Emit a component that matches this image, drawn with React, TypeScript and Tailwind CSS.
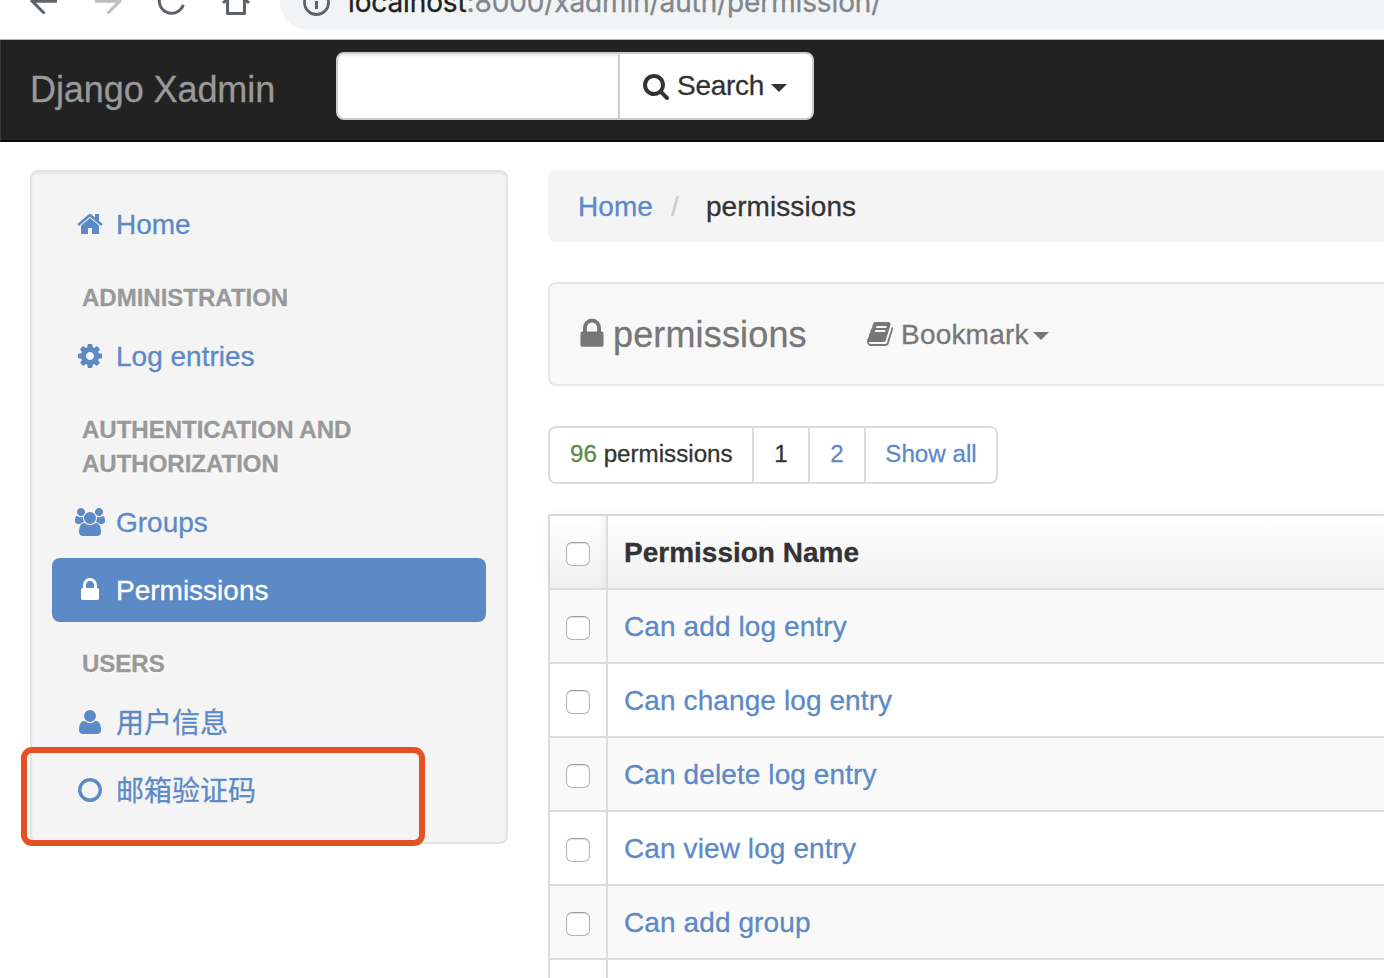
import type { ReactNode } from "react";

const PATHS = {
  home: "M1472 992v480q0 26-19 45t-45 19h-384v-384h-256v384h-384q-26 0-45-19t-19-45v-480q0-1 .5-3t.5-3l575-474 575 474q1 2 1 6zm223-69l-62 74q-8 9-21 11h-3q-13 0-21-7l-692-577-692 577q-12 8-24 7-13-2-21-11l-62-74q-8-10-7-23.5t11-21.5l719-599q32-26 76-26t76 26l244 204v-195q0-14 9-23t23-9h192q14 0 23 9t9 23v408l219 182q10 8 11 21.5t-7 23.5z",
  cog: "M1152 896q0-106-75-181t-181-75-181 75-75 181 75 181 181 75 181-75 75-181zm512-109v222q0 12-8 23t-20 13l-185 28q-19 54-39 91 35 50 107 138 10 12 10 25t-9 23q-27 37-99 108t-94 71q-12 0-26-9l-138-108q-44 23-91 38-16 136-29 186-7 28-36 28h-222q-14 0-24.5-8.5t-11.5-21.5l-28-184q-49-16-90-37l-141 107q-10 9-25 9-14 0-25-11-126-114-165-168-7-10-7-23 0-12 8-23 15-21 51-66.5t54-70.5q-27-50-41-99l-183-27q-13-2-21-12.5t-8-23.5v-222q0-12 8-23t19-13l186-28q14-46 39-92-40-57-107-138-10-12-10-24 0-10 9-23 26-36 98.5-107.5t94.5-71.5q13 0 26 10l138 107q44-23 91-38 16-136 29-186 7-28 36-28h222q14 0 24.5 8.5t11.5 21.5l28 184q49 16 90 37l142-107q9-9 24-9 13 0 25 10 129 119 165 170 7 8 7 22 0 12-8 23-15 21-51 66.5t-54 70.5q26 50 41 98l183 28q13 2 21 12.5t8 23.5z",
  group: "M657 896q-162 5-265 128h-134q-82 0-138-40.5t-56-118.5q0-353 124-353 6 0 43.5 21t97.5 42.5 119 21.5q67 0 133-23-5 37-5 66 0 139 81 256zm1071 637q0 120-73 189.5t-194 69.5h-874q-121 0-194-69.5t-73-189.5q0-53 3.5-103.5t14-109 26.5-108.5 43-97.5 62-81 85.5-53.5 111.5-20q10 0 43 21.5t73 48 107 48 135 21.5 135-21.5 107-48 73-48 43-21.5q61 0 111.5 20t85.5 53.5 62 81 43 97.5 26.5 108.5 14 109 3.5 103.5zm-1024-1277q0 106-75 181t-181 75-181-75-75-181 75-181 181-75 181 75 75 181zm704 384q0 159-112.5 271.5t-271.5 112.5-271.5-112.5-112.5-271.5 112.5-271.5 271.5-112.5 271.5 112.5 112.5 271.5zm576 225q0 78-56 118.5t-138 40.5h-134q-103-123-265-128 81-117 81-256 0-29-5-66 66 23 133 23 59 0 119-21.5t97.5-42.5 43.5-21q124 0 124 353zm-128-609q0 106-75 181t-181 75-181-75-75-181 75-181 181-75 181 75 75 181z",
  lock: "M640 768h512v-192q0-106-75-181t-181-75-181 75-75 181v192zm832 96v576q0 40-28 68t-68 28h-960q-40 0-68-28t-28-68v-576q0-40 28-68t68-28h32v-192q0-184 132-316t316-132 316 132 132 316v192h32q40 0 68 28t28 68z",
  user: "M1600 1405q0 120-73 189.5t-194 69.5h-874q-121 0-194-69.5t-73-189.5q0-53 3.5-103.5t14-109 26.5-108.5 43-97.5 62-81 85.5-53.5 111.5-20q9 0 42 21.5t74.5 48 108 48 133.5 21.5 133.5-21.5 108-48 74.5-48 42-21.5q61 0 111.5 20t85.5 53.5 62 81 43 97.5 26.5 108.5 14 109 3.5 103.5zm-320-893q0 159-112.5 271.5t-271.5 112.5-271.5-112.5-112.5-271.5 112.5-271.5 271.5-112.5 271.5 112.5 112.5 271.5z",
  circle: "M896 352q-148 0-273 73t-198 198-73 273 73 273 198 198 273 73 273-73 198-198 73-273-73-273-198-198-273-73zm768 544q0 209-103 385.5t-279.5 279.5-385.5 103-385.5-103-279.5-279.5-103-385.5 103-385.5 279.5-279.5 385.5-103 385.5 103 279.5 279.5 103 385.5z",
  search: "M1216 832q0-185-131.5-316.5t-316.5-131.5-316.5 131.5-131.5 316.5 131.5 316.5 316.5 131.5 316.5-131.5 131.5-316.5zm512 832q0 52-38 90t-90 38q-54 0-90-38l-343-342q-179 124-399 124-143 0-273.5-55.5t-225-150-150-225-55.5-273.5 55.5-273.5 150-225 225-150 273.5-55.5 273.5 55.5 225 150 150 225 55.5 273.5q0 220-124 399l343 343q37 37 37 90z",
  book: "M1703 478q40 57 18 129l-275 906q-19 64-76.5 107.5t-122.5 43.5h-923q-77 0-148.5-53.5t-99.5-131.5q-24-67-2-127 0-4 3-27t4-37q1-8-3-21.5t-3-19.5q2-11 8-21t16.5-23.5 16.5-23.5q23-38 45-91.5t30-91.5q3-10 .5-30t-.5-28q3-11 17-28t17-23q21-36 42-92t25-90q1-9-2.5-32t.5-28q4-13 22-30.5t22-22.5q19-26 42.5-84.5t27.5-96.5q1-8-3-25.5t-2-26.5q2-8 9-18t18-23 17-21q8-12 16.5-30.5t15-35 16-36 19.5-32 26.5-23.5 36-11.5 47.5 5.5l-1 3q38-9 51-9h761q74 0 114 56t18 130l-274 906q-36 119-71.5 153.5t-128.5 34.5h-869q-27 0-38 15-11 16-1 43 24 70 144 70h923q29 0 56-15.5t35-41.5l300-987q7-22 5-57 38 15 59 43zm-1064 2q-4 13 2 22.5t20 9.5h608q13 0 25.5-9.5t16.5-22.5l21-64q4-13-2-22.5t-20-9.5h-608q-13 0-25.5 9.5t-16.5 22.5zm-83 256q-4 13 2 22.5t20 9.5h608q13 0 25.5-9.5t16.5-22.5l21-64q4-13-2-22.5t-20-9.5h-608q-13 0-25.5 9.5t-16.5 22.5z",
};

type IconName = keyof typeof PATHS;

function Icon({ name, className = "size-7" }: { name: IconName; className?: string }) {
  return (
    <svg
      viewBox={name === "group" ? "0 0 2048 1792" : "0 0 1792 1792"}
      className={`shrink-0 fill-current ${className}`}
      aria-hidden="true"
    >
      <path d={PATHS[name]} />
    </svg>
  );
}

function Caret({ className = "" }: { className?: string }) {
  return (
    <svg viewBox="0 0 16 8" className={`h-2 w-4 shrink-0 fill-current ${className}`} aria-hidden="true">
      <path d="M0 0h16L8 8z" />
    </svg>
  );
}

function BrowserBar() {
  return (
    <div className="flex h-10 items-start overflow-hidden border-b border-[#b4b5b7] bg-white">
      <svg viewBox="0 0 280 39" className="h-[39px] w-[280px] shrink-0 fill-none" strokeWidth="3" aria-hidden="true">
        <g stroke="#5f6368">
          <path d="M57 1.300H33M44.500 13.500L32 1L44.500 -11.500" />
          <path d="M183.300 4.800A12.300 12.300 0 1 1 180.500 -7.500" />
          <path d="M223 3L236 -9L249 3M227.500 0V13.500H244.500V0" strokeLinejoin="round" />
        </g>
        <path d="M95 1.300H119M107.500 13.500L120 1L107.500 -11.500" stroke="#bcbec0" />
      </svg>
      <div className="flex h-[30px] grow items-start rounded-bl-[28px] bg-[#f1f3f4]">
        <svg viewBox="0 0 32 20" className="ml-5 h-5 w-8 shrink-0" aria-hidden="true">
          <circle cx="16.500" cy="2.500" r="12" fill="none" stroke="#5f6368" strokeWidth="2.800" />
          <path d="M16.500 1v8" stroke="#5f6368" strokeWidth="3" />
        </svg>
        <div className="-mt-[18px] ml-4 font-['Inter',sans-serif] text-[28px] leading-10 tracking-[-0.120px] whitespace-nowrap text-[#80868b]">
          <span className="text-[#202124]">localhost</span>:8000/xadmin/auth/permission/
        </div>
      </div>
    </div>
  );
}

function Navbar() {
  return (
    <header className="flex h-[102px] items-start border-b-2 border-l border-b-[#080808] border-l-[#3a3a3a] bg-[#222]">
      <div className="mt-[30px] ml-[29px] w-[306px] text-[36px] leading-10 tracking-[-0.080px] whitespace-nowrap text-[#999]">
        Django Xadmin
      </div>
      <div className="mt-3 flex h-[68px] w-[478px] overflow-hidden rounded-lg border-2 border-[#ccc] bg-white text-[#333]">
        <input className="w-[282px] border-r-2 border-[#ccc] shadow-[inset_0_2px_2px_rgba(0,0,0,0.075)] outline-none" aria-label="Search" />
        <button className="flex grow items-center pl-[22px]">
          <Icon name="search" className="mb-px size-7" />
          <span className="ml-[7px] text-[28px] leading-10 tracking-[-0.300px]">Search</span>
          <Caret className="mt-1 ml-[7px]" />
        </button>
      </div>
    </header>
  );
}

function NavItem({ icon, children, active = false }: { icon: IconName; children: ReactNode; active?: boolean }) {
  return (
    <li
      className={
        active
          ? "flex h-16 items-center rounded-lg bg-[#5c8ac6] pl-[22px] text-white"
          : "flex h-16 items-center pl-[22px] text-[#5c8ac6]"
      }
    >
      <span className="flex w-8 justify-center">
        <Icon name={icon} className={icon === "group" ? "h-7 w-8" : "size-7"} />
      </span>
      <span className="mt-0.5 ml-2.5 text-[28px] leading-10 whitespace-nowrap">{children}</span>
    </li>
  );
}

function NavHeader({ children }: { children: ReactNode }) {
  return (
    <h2 className="mt-[25px] mb-[9px] pl-[30px] text-[24px] leading-[34px] font-bold text-[#999] [text-shadow:0_2px_0_rgba(255,255,255,0.5)]">
      {children}
    </h2>
  );
}

function Sidebar() {
  return (
    <nav className="relative h-[674px] w-[478px] shrink-0 rounded-lg border-2 border-[#e3e3e3] bg-[#f4f4f4] p-5 shadow-[inset_0_2px_2px_rgba(0,0,0,0.05)]">
      <ul>
        <NavItem icon="home">Home</NavItem>
      </ul>
      <NavHeader>ADMINISTRATION</NavHeader>
      <ul>
        <NavItem icon="cog">Log entries</NavItem>
      </ul>
      <NavHeader>
        AUTHENTICATION AND
        <br />
        AUTHORIZATION
      </NavHeader>
      <ul className="flex flex-col gap-1">
        <NavItem icon="group">Groups</NavItem>
        <NavItem icon="lock" active>Permissions</NavItem>
      </ul>
      <NavHeader>USERS</NavHeader>
      <ul className="flex flex-col gap-1">
        <NavItem icon="user"><span className="block pt-px">用户信息</span></NavItem>
        <NavItem icon="circle"><span className="block pt-px">邮箱验证码</span></NavItem>
      </ul>
      <div className="absolute top-[574.500px] -left-[11.500px] h-[99.500px] w-[404px] rounded-[11px] border-[6px] border-[#e65025]" />
    </nav>
  );
}

function Checkbox() {
  return (
    <span className="mt-1 block size-6 rounded-[6px] border border-[#b4b4b4] border-t-[#9c9c9c] bg-white shadow-[inset_0_1px_1px_rgba(0,0,0,0.12)]" />
  );
}

const ROWS = ["Can add log entry", "Can change log entry", "Can delete log entry", "Can view log entry", "Can add group", ""];

function PermissionTable() {
  return (
    <div className="mt-[30px] border-t-2 border-l-2 border-[#ddd]">
      <div className="flex h-[74px] border-b-2 border-[#ddd] bg-linear-to-b from-white to-[#f0f0f0] shadow-[0_0_10px_rgba(0,0,0,0.06)]">
        <div className="flex w-[58px] items-center justify-center border-r-2 border-[#ddd] shadow-[inset_-6px_0_8px_-4px_rgba(0,0,0,0.05)]">
          <Checkbox />
        </div>
        <div className="flex items-center pt-0.5 pl-4 text-[28px] font-bold text-[#333]">Permission Name</div>
      </div>
      {ROWS.map((label, i) => (
        <div key={i} className="flex h-[74px] border-b-2 border-[#ddd] odd:bg-white even:bg-[#f9f9f9]">
          <div className="flex w-[58px] items-center justify-center border-r-2 border-[#ddd]">
            <Checkbox />
          </div>
          <div className="flex items-center pt-0.5 pl-4 text-[28px] tracking-[0.100px] text-[#5c8ac6] [-webkit-text-stroke:0.300px]">{label}</div>
        </div>
      ))}
    </div>
  );
}

export default function App() {
  return (
    <div className="h-[978px] w-[1384px] overflow-hidden bg-white font-['Liberation_Sans','Noto_Sans_CJK_SC',sans-serif] [-webkit-text-stroke:0.300px]">
      <BrowserBar />
      <Navbar />
      <div className="flex gap-10 pt-7 pl-[30px]">
        <Sidebar />
        <main className="min-w-0 grow">
          <div className="flex h-[72px] items-center rounded-l-lg bg-[#f4f4f4] pt-0.5 pl-[30px] text-[28px] tracking-[0.080px] whitespace-nowrap">
            <span className="text-[#5c8ac6]">Home</span>
            <span className="ml-[18px] text-[#ccc]">/</span>
            <span className="ml-[27px] text-[#333]">permissions</span>
          </div>
          <div className="mt-10 flex h-[104px] items-center rounded-l-lg border-2 border-r-0 border-[#e7e7e7] bg-[#f8f8f8] text-[#777]">
            <Icon name="lock" className="mb-px ml-6 size-9" />
            <span className="ml-[3px] w-[253px] pt-px text-[36px] leading-10 tracking-[0.150px]">permissions</span>
            <Icon name="book" className="size-7" />
            <span className="ml-[7px] pt-0.5 text-[28px] leading-10 tracking-[0.200px]">Bookmark</span>
            <Caret className="mt-1 ml-1" />
          </div>
          <div className="mt-10 flex h-[58px] w-[450px] rounded-lg border-2 border-[#ddd] text-[24.200px] leading-[52px] whitespace-nowrap text-[#5c8ac6]">
            <span className="w-[204px] border-r-2 border-[#ddd] pl-5 text-[#333]">
              <span className="text-[#5b8a4a]">96</span> permissions
            </span>
            <span className="w-14 border-r-2 border-[#ddd] text-center text-[#333]">1</span>
            <span className="w-14 border-r-2 border-[#ddd] text-center">2</span>
            <span className="grow text-center">Show all</span>
          </div>
          <PermissionTable />
        </main>
      </div>
    </div>
  );
}
